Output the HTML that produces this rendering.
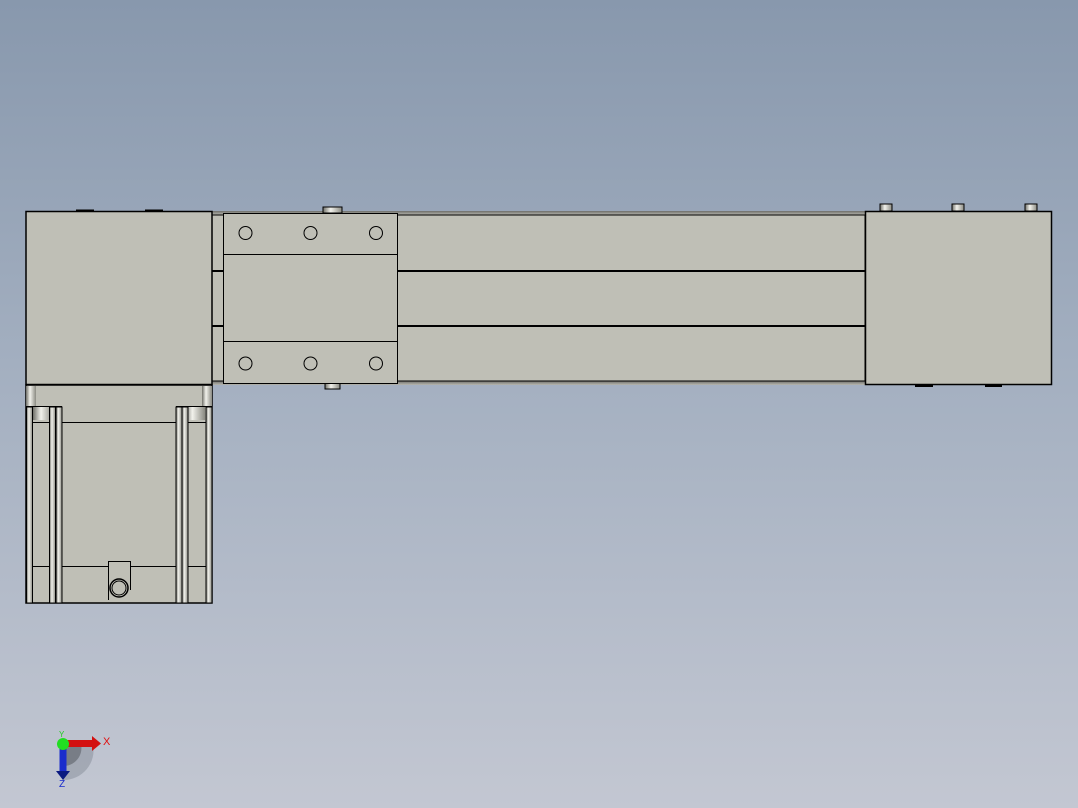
<!DOCTYPE html>
<html><head><style>
html,body{margin:0;padding:0;width:1078px;height:808px;overflow:hidden}
body{background:linear-gradient(to bottom,#8898ad 0%,#a3afc0 45%,#c3c7d2 100%)}
svg{position:absolute;left:0;top:0}
</style></head><body>
<svg width="1078" height="808" viewBox="0 0 1078 808">
<defs>
<linearGradient id="cyl" x1="0" x2="1">
<stop offset="0" stop-color="#6f6f68"/><stop offset="0.4" stop-color="#f2f2ec"/><stop offset="1" stop-color="#8a8a82"/>
</linearGradient>
<linearGradient id="strip" x1="0" y1="0" x2="0" y2="1">
<stop offset="0" stop-color="#6e6e6a"/><stop offset="1" stop-color="#b8b8b0"/>
</linearGradient>
</defs>
<g stroke="#000" fill="#bfbfb6">
<!-- rail -->
<rect x="212" y="211" width="653" height="4" fill="url(#strip)" stroke="none"/>
<rect x="212" y="381" width="653" height="4" fill="url(#strip)" stroke="none"/>
<rect x="212" y="215" width="653" height="166" stroke-width="1"/>
<line x1="212" y1="271" x2="865" y2="271" stroke-width="2"/>
<line x1="212" y1="326" x2="865" y2="326" stroke-width="2"/>
<!-- screws top -->
<rect x="323" y="207" width="19" height="6" fill="url(#cyl)" stroke-width="1"/>
<rect x="325" y="383" width="15" height="6" fill="url(#cyl)" stroke-width="1"/>
<!-- carriage -->
<rect x="223.5" y="213.5" width="174" height="170" stroke-width="1"/>
<line x1="223" y1="254.5" x2="397" y2="254.5"/>
<line x1="223" y1="341.5" x2="397" y2="341.5"/>
<g fill="none">
<circle cx="245.5" cy="233" r="6.5"/><circle cx="310.5" cy="233" r="6.5"/><circle cx="376" cy="233" r="6.5"/>
<circle cx="245.5" cy="363.5" r="6.5"/><circle cx="310.5" cy="363.5" r="6.5"/><circle cx="376" cy="363.5" r="6.5"/>
</g>
<!-- left block -->
<rect x="26" y="211.5" width="186" height="173" stroke-width="1.5"/>
<line x1="76" y1="210.5" x2="94" y2="210.5" stroke-width="2"/>
<line x1="145" y1="210.5" x2="163" y2="210.5" stroke-width="2"/>
<!-- right block -->
<rect x="865.5" y="211.5" width="186" height="173" stroke-width="1.5"/>
<rect x="880" y="204" width="12" height="7" fill="url(#cyl)" stroke-width="1"/>
<rect x="952" y="204" width="12" height="7" fill="url(#cyl)" stroke-width="1"/>
<rect x="1025" y="204" width="12" height="7" fill="url(#cyl)" stroke-width="1"/>
<line x1="915" y1="386" x2="933" y2="386" stroke-width="2"/>
<line x1="985" y1="386" x2="1002" y2="386" stroke-width="2"/>
<!-- motor -->
<rect x="26" y="385" width="186" height="218" stroke-width="1.5"/>
<rect x="26" y="386" width="10" height="20" fill="url(#cyl)" stroke="none"/>
<rect x="202" y="386" width="10" height="20" fill="url(#cyl)" stroke="none"/>
<line x1="26" y1="406.5" x2="62" y2="406.5"/>
<line x1="176" y1="406.5" x2="212" y2="406.5"/>
<rect x="33" y="407" width="20" height="13" fill="url(#cyl)" stroke="none"/>
<rect x="184" y="407" width="21" height="13" fill="url(#cyl)" stroke="none"/>
<line x1="26" y1="422.5" x2="212" y2="422.5"/>
<line x1="26" y1="566.5" x2="212" y2="566.5"/>
<rect x="26.5" y="407" width="6" height="196" fill="url(#cyl)" stroke-width="1"/>
<rect x="49.5" y="407" width="6" height="196" fill="url(#cyl)" stroke-width="1"/>
<rect x="56" y="407" width="6" height="196" fill="url(#cyl)" stroke-width="1"/>
<rect x="176" y="407" width="6" height="196" fill="url(#cyl)" stroke-width="1"/>
<rect x="182" y="407" width="6" height="196" fill="url(#cyl)" stroke-width="1"/>
<rect x="206" y="407" width="6" height="196" fill="url(#cyl)" stroke-width="1"/>
<path d="M108.5 600 V561.5 H130.5 V590" fill="#bfbfb6"/>
<circle cx="119" cy="588" r="9" fill="#bfbfb6" stroke-width="1.5"/>
<circle cx="119" cy="588" r="7" fill="none"/>
</g>
<!-- triad -->
<path d="M63 744 L63 780 A30 30 0 0 0 93 744 Z" fill="#9096a2" opacity="0.6"/>
<path d="M63 744 L63 766 A18 18 0 0 0 81 744 Z" fill="#5b6068" opacity="0.6"/>
<rect x="63" y="740" width="30" height="7" fill="#d31010"/>
<polygon points="92,736 101,743.5 92,751" fill="#d31010"/>
<rect x="59.5" y="744" width="7" height="28" fill="#1a2ccc"/>
<polygon points="56,771 70,771 63,780" fill="#0a1a80"/>
<circle cx="63" cy="744" r="6" fill="#22dd22"/>
<text x="103" y="745" font-family="Liberation Sans, sans-serif" font-size="11" fill="#e01010">X</text>
<text x="59" y="787" font-family="Liberation Sans, sans-serif" font-size="10" fill="#1a2ccc">Z</text>
<text x="59" y="737" font-family="Liberation Sans, sans-serif" font-size="8" fill="#22cc22">Y</text>
</svg>
</body></html>
